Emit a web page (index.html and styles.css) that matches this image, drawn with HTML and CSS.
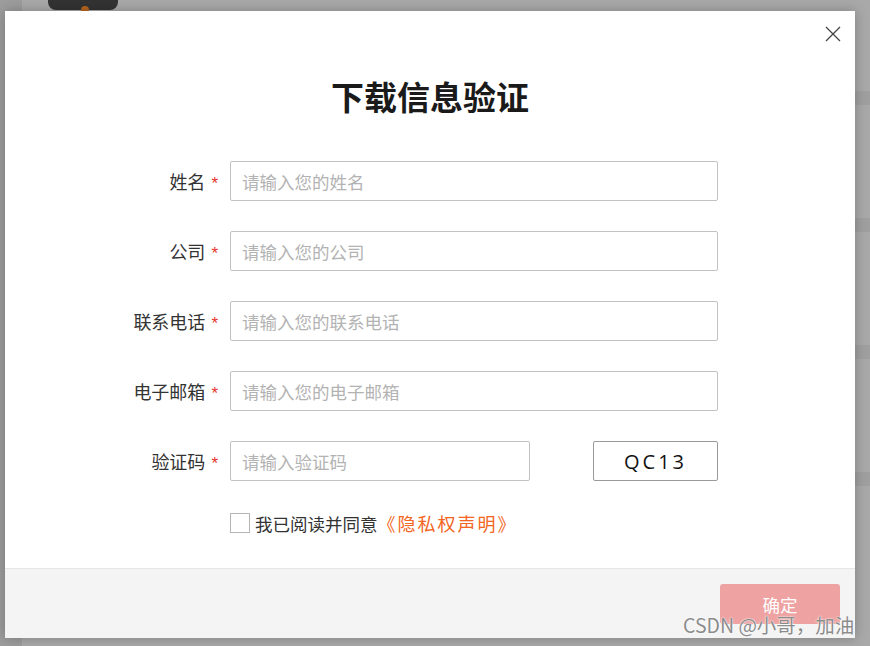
FILE: index.html
```html
<!DOCTYPE html>
<html lang="zh">
<head>
<meta charset="utf-8">
<title>下载信息验证</title>
<link rel="stylesheet" href="styles.css">
</head>
<body>
<div class="page">
  <div class="side"></div>
  <div class="main">
    <div class="tab"><span class="dot"></span></div>
    <div class="band b1"></div>
    <div class="band"></div>
    <div class="band"></div>
    <div class="band"></div>
  </div>
</div>

<div class="modal">
  <button class="close" aria-label="关闭">
    <svg width="16" height="16" viewBox="0 0 16 16"><path d="M1 1L15 15M15 1L1 15" stroke="#444" stroke-width="1.3" fill="none"/></svg>
  </button>
  <div class="body">
    <h1 class="title">下载信息验证</h1>
    <form class="form">
      <div class="row">
        <label class="label">姓名<span class="req">*</span></label>
        <input class="input" placeholder="请输入您的姓名">
      </div>
      <div class="row">
        <label class="label">公司<span class="req">*</span></label>
        <input class="input" placeholder="请输入您的公司">
      </div>
      <div class="row">
        <label class="label">联系电话<span class="req">*</span></label>
        <input class="input" placeholder="请输入您的联系电话">
      </div>
      <div class="row">
        <label class="label">电子邮箱<span class="req">*</span></label>
        <input class="input" placeholder="请输入您的电子邮箱">
      </div>
      <div class="row">
        <label class="label">验证码<span class="req">*</span></label>
        <input class="input short" placeholder="请输入验证码">
        <div class="code">QC13</div>
      </div>
      <div class="agree">
        <span class="check"></span>
        <span class="agree-text">我已阅读并同意<a class="link">《隐私权声明》</a></span>
      </div>
    </form>
  </div>
  <div class="footer">
    <button class="ok">确定</button>
  </div>
</div>
<div class="watermark">CSDN @小哥，加油</div>
</body>
</html>
```

FILE: styles.css
```css
* { box-sizing: border-box; }
html, body { margin: 0; padding: 0; }
body {
  width: 870px;
  height: 646px;
  overflow: hidden;
  background: #a9a9a9;
  font-family: "Noto Sans CJK SC", "Liberation Sans", sans-serif;
  position: relative;
  text-spacing-trim: space-all;
}
.page { display: flex; height: 646px; }
.side { width: 22px; background: #9d9d9d; }
.main { flex: 1; position: relative; padding-top: 91px; display: flex; flex-direction: column; gap: 113px; }
.tab {
  position: absolute; left: 26px; top: -10px;
  width: 70px; height: 20px; border-radius: 8px;
  background: #333;
}
.dot { position: absolute; left: 33px; top: 16px; width: 8px; height: 8px; border-radius: 50%; background: #b5651d; }
.band { height: 14px; background: #a0a0a0; }

.modal {
  position: absolute; left: 5px; top: 11px;
  width: 850px; height: 627px;
  background: #fff;
  box-shadow: 0 0 12px rgba(0,0,0,0.25);
  display: flex; flex-direction: column;
}
.close {
  position: absolute; right: 14px; top: 15px;
  background: none; border: 0; padding: 0; width: 16px; height: 16px; cursor: pointer;
}
.close svg { display: block; }
.body { flex: 1; padding-top: 61px; }
.title {
  margin: 0 0 41px; text-align: center;
  font-size: 33px; font-weight: 700; color: #1a1a1a; line-height: 48px;
}
.form { display: flex; flex-direction: column; gap: 30px; padding-left: 225px; }
.row { display: flex; align-items: center; height: 40px; }
.label {
  width: 100px; margin-left: -100px; padding-right: 12px;
  text-align: right; font-size: 18px; color: #333; white-space: nowrap;
}
.req { color: #e6352c; margin-left: 6px; font-family: "Liberation Sans", sans-serif; font-size: 17px; }
.input {
  width: 488px; height: 40px; border: 1px solid #c2c2c2; border-radius: 2px;
  padding: 0 11px; font-size: 17.5px; font-family: inherit; color: #333; outline: none;
}
.input::placeholder { color: #b3b3b3; }
.input.short { width: 300px; }
.code {
  margin-left: 63px; width: 125px; height: 40px;
  border: 1px solid #9a9a9a; border-radius: 2px;
  display: flex; align-items: center; justify-content: center;
  font-family: "Open Sans", "Liberation Sans", sans-serif; font-size: 20px; letter-spacing: 3px; color: #111;
}
.agree { display: flex; align-items: center; gap: 5px; height: 20px; margin-top: 2px; }
.check { width: 20px; height: 20px; border: 1px solid #b5b5b5; background: #fff; flex: none; }
.agree-text { font-size: 17.5px; color: #333; line-height: 20px; }
.link { color: #f26522; font-size: 18px; letter-spacing: 2px; }

.footer {
  height: 70px; background: #f4f4f4; border-top: 1px solid #e6e6e6;
  display: flex; justify-content: flex-end; align-items: flex-start;
  padding: 15px 15px 0 0;
}
.ok {
  width: 120px; height: 40px; border: 0; border-radius: 3px;
  background: #efa2a2; color: #fff; font-size: 17.5px; font-family: inherit;
}
.watermark {
  position: absolute; left: 683px; top: 610px;
  font-family: "Noto Sans CJK SC", "Liberation Sans", sans-serif;
  font-size: 19.5px; color: #8c8c8c; line-height: 30px;
  text-shadow: 0 0 2px #fff, 0 0 1px #fff;
  white-space: nowrap;
}
```
